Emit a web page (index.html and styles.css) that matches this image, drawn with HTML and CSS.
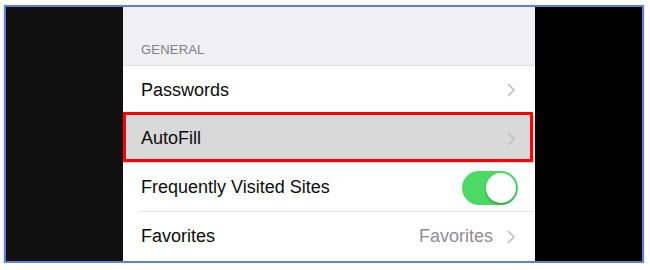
FILE: index.html
```html
<!DOCTYPE html>
<html>
<head>
<meta charset="utf-8">
<link rel="stylesheet" href="styles.css">
</head>
<body>
<div class="frame">
  <div class="side side-left"></div>
  <div class="settings">
    <div class="section-header"><span>GENERAL</span></div>
    <div class="row">
      <span class="label">Passwords</span>
      <span class="chev"><svg width="9" height="14" viewBox="0 0 9 14"><path d="M1.5 1.5 L7 7 L1.5 12.5" fill="none" stroke="#c7c7cc" stroke-width="1.8" stroke-linecap="round" stroke-linejoin="round"/></svg></span>
    </div>
    <div class="row row-selected">
      <span class="label">AutoFill</span>
      <span class="chev"><svg width="9" height="14" viewBox="0 0 9 14"><path d="M1.5 1.5 L7 7 L1.5 12.5" fill="none" stroke="#c4c4c8" stroke-width="1.8" stroke-linecap="round" stroke-linejoin="round"/></svg></span>
    </div>
    <div class="row row-sep">
      <span class="label">Frequently Visited Sites</span>
      <span class="toggle"><span class="knob"></span></span>
    </div>
    <div class="row">
      <span class="label">Favorites</span>
      <span class="value">Favorites</span>
      <span class="chev"><svg width="9" height="14" viewBox="0 0 9 14"><path d="M1.5 1.5 L7 7 L1.5 12.5" fill="none" stroke="#c7c7cc" stroke-width="1.8" stroke-linecap="round" stroke-linejoin="round"/></svg></span>
    </div>
  </div>
  <div class="side side-right"></div>
</div>
</body>
</html>
```
FILE: styles.css
```css
html, body {
  margin: 0;
  padding: 0;
  background: #ffffff;
}
body {
  padding: 5px 0 0 4px;
  font-family: "Liberation Sans", Arial, sans-serif;
}
.frame {
  width: 636px;
  height: 254px;
  border: 2px solid #5b80d8;
  display: flex;
  box-shadow: 0 2px 3px rgba(0, 0, 0, 0.22);
  overflow: hidden;
}
.side {
  height: 100%;
}
.side-left {
  width: 117px;
  background: #101010;
}
.side-right {
  flex: 1;
  background: #000000;
}
.settings {
  width: 412px;
  background: #ffffff;
  display: flex;
  flex-direction: column;
}
.section-header {
  height: 59px;
  background: #efeff4;
  border-bottom: 1px solid #e2e2e6;
  box-sizing: border-box;
  display: flex;
  align-items: flex-end;
  padding: 0 0 8px 18px;
  font-size: 13px;
  color: #7f7f84;
  letter-spacing: 0.2px;
}
.row {
  height: 49px;
  display: flex;
  align-items: center;
  padding: 0 18px;
  font-size: 18px;
  color: #0c0c0c;
  position: relative;
  box-sizing: border-box;
}
.label {
  flex: 1;
}
.row-selected {
  background: #d9d9d9;
}
.row-selected::after {
  content: "";
  position: absolute;
  left: 0;
  right: 2px;
  top: -3px;
  bottom: 1px;
  border: 3px solid #ff0000;
}
.row-sep::after {
  content: "";
  position: absolute;
  left: 17px;
  right: 0;
  bottom: 0;
  height: 1px;
  background: #e3e3e6;
}
.chev {
  display: flex;
  align-items: center;
  margin-right: 1px;
}
.value {
  color: #8e8e93;
  margin-right: 14px;
}
.toggle {
  width: 56px;
  height: 34px;
  border-radius: 17px;
  background: #4cd964;
  position: relative;
  margin-right: -1px;
}
.knob {
  position: absolute;
  right: 2px;
  top: 2px;
  width: 30px;
  height: 30px;
  border-radius: 50%;
  background: #ffffff;
  box-shadow: 0 2px 3px rgba(0, 0, 0, 0.25);
}
```
